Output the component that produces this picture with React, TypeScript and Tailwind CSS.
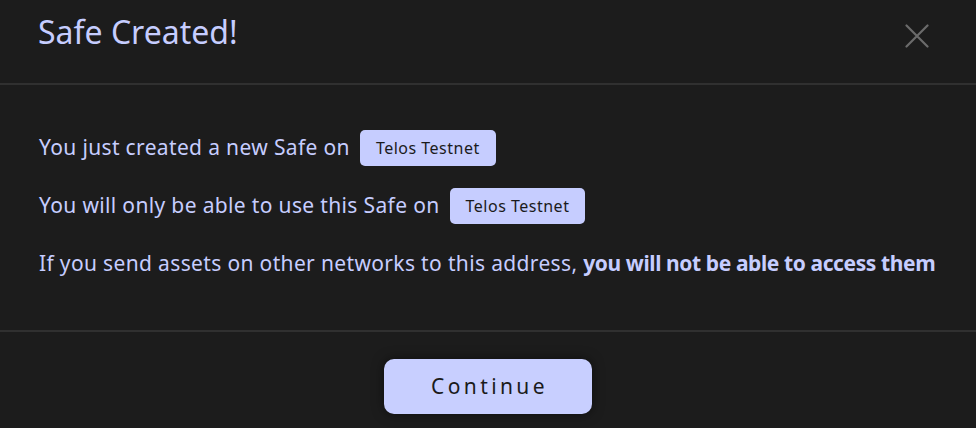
const NetworkChip = ({ name }: { name: string }) => (
  <span className="ml-[10px] inline-flex h-[36px] items-center rounded-[5px] bg-[#c6cdff] px-[16px] text-[16px] tracking-[0.5px] text-[#1b1b1b]">
    {name}
  </span>
);

export default function App() {
  return (
    <div
      className="flex h-[428px] w-[976px] flex-col bg-[#1c1c1c] text-[#c6cdff]"
      style={{ fontFamily: "'Noto Sans', sans-serif" }}
    >
      {/* Header */}
      <div className="flex h-[83px] items-start justify-between pl-[38px] pr-[47px] pt-[10px]">
        <h2 className="text-[32px] leading-[44px]">Safe Created!</h2>
        <button className="mt-[14px] text-[#6b6b6b]">
          <svg width="24" height="24" viewBox="0 0 24 24" fill="none" stroke="currentColor" strokeWidth="2.2" strokeLinecap="round">
            <path d="M1.5 1.5 22.5 22.5M22.5 1.5 1.5 22.5" />
          </svg>
        </button>
      </div>
      <div className="h-[2px] bg-[#303030]" />

      {/* Body */}
      <div className="flex h-[245px] flex-col gap-[22px] pl-[39px] pt-[45px] text-[21px] tracking-[0.35px]">
        <p className="flex h-[36px] items-center">
          You just created a new Safe on
          <NetworkChip name="Telos Testnet" />
        </p>
        <p className="flex h-[36px] items-center">
          You will only be able to use this Safe on
          <NetworkChip name="Telos Testnet" />
        </p>
        <p className="flex h-[36px] items-center">
          If you send assets on other networks to this address,&nbsp;
          <b className="font-bold tracking-[-0.4px]">you will not be able to access them</b>
        </p>
      </div>
      <div className="h-[2px] bg-[#303030]" />

      {/* Footer */}
      <div className="flex flex-1 items-start justify-center pt-[27px]">
        <button className="h-[55px] w-[208px] rounded-[10px] bg-[#c8cfff] pl-[3px] text-[21px] tracking-[3.4px] text-[#1b1b1b] shadow-[0_0_12px_rgba(0,0,0,0.5)]">
          Continue
        </button>
      </div>
    </div>
  );
}
